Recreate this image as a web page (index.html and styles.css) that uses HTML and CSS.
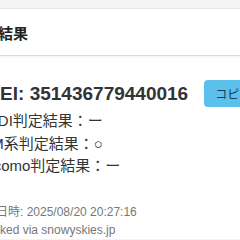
FILE: index.html
```html
<!DOCTYPE html>
<html lang="ja">
<head>
    <meta charset="UTF-8">
    <meta name="viewport" content="width=device-width, initial-scale=1.0">
    <title>判定結果</title>
    <link rel="stylesheet" href="styles.css">
</head>
<body>
    <div class="page">
        <div class="card">
            <div class="card-header">
                <h2>判定結果</h2>
            </div>
            <div class="card-body">
                <div class="imei-row">
                    <span class="imei">IMEI: 351436779440016</span>
                    <button type="button" class="btn-copy">コピー</button>
                </div>
                <div class="result">KDDI判定結果：ー</div>
                <div class="result">SIM系判定結果：○</div>
                <div class="result">docomo判定結果：ー</div>
            </div>
            <div class="card-footer">
                <div>判定日時: 2025/08/20 20:27:16</div>
                <div>Checked via snowyskies.jp</div>
            </div>
        </div>
    </div>
</body>
</html>
```

FILE: styles.css
```css
html, body {
    margin: 0;
    padding: 0;
    overflow: hidden;
}

body {
    font-family: 'Liberation Sans', Arial, 'Noto Sans CJK JP', sans-serif;
    background-color: #f3f3f3;
    color: #333;
}

.page {
    margin-left: -40px;
    width: 400px;
    padding-top: 8px;
}

.card {
    background-color: white;
    border-top: 1px solid #e8e8e8;
}

.card-header {
    height: 46px;
    display: flex;
    align-items: center;
    padding-left: 8px;
    border-bottom: 1px solid #dcdcdc;
    box-shadow: 0 1px 2px rgba(0, 0, 0, 0.06);
}

h2 {
    margin: 0;
    font-size: 15px;
    font-weight: bold;
    color: #222;
}

.card-body {
    padding: 24px 0 0 20px;
}

.imei-row {
    display: flex;
    align-items: center;
    gap: 16px;
    margin-bottom: 3px;
}

.imei {
    margin-left: -1px;
    font-size: 19px;
    font-weight: bold;
    color: #333;
}

.btn-copy {
    height: 27px;
    padding: 0 11px;
    border: none;
    border-radius: 4px;
    background-color: #5bc0eb;
    color: #16395a;
    font-family: 'Noto Sans CJK JP', sans-serif;
    font-size: 12px;
}

.result {
    margin-left: -3px;
    font-size: 15px;
    line-height: 22.5px;
}

.card-footer {
    padding: 25px 0 0 12px;
    font-size: 12px;
    line-height: 18px;
    color: #777;
}
```
